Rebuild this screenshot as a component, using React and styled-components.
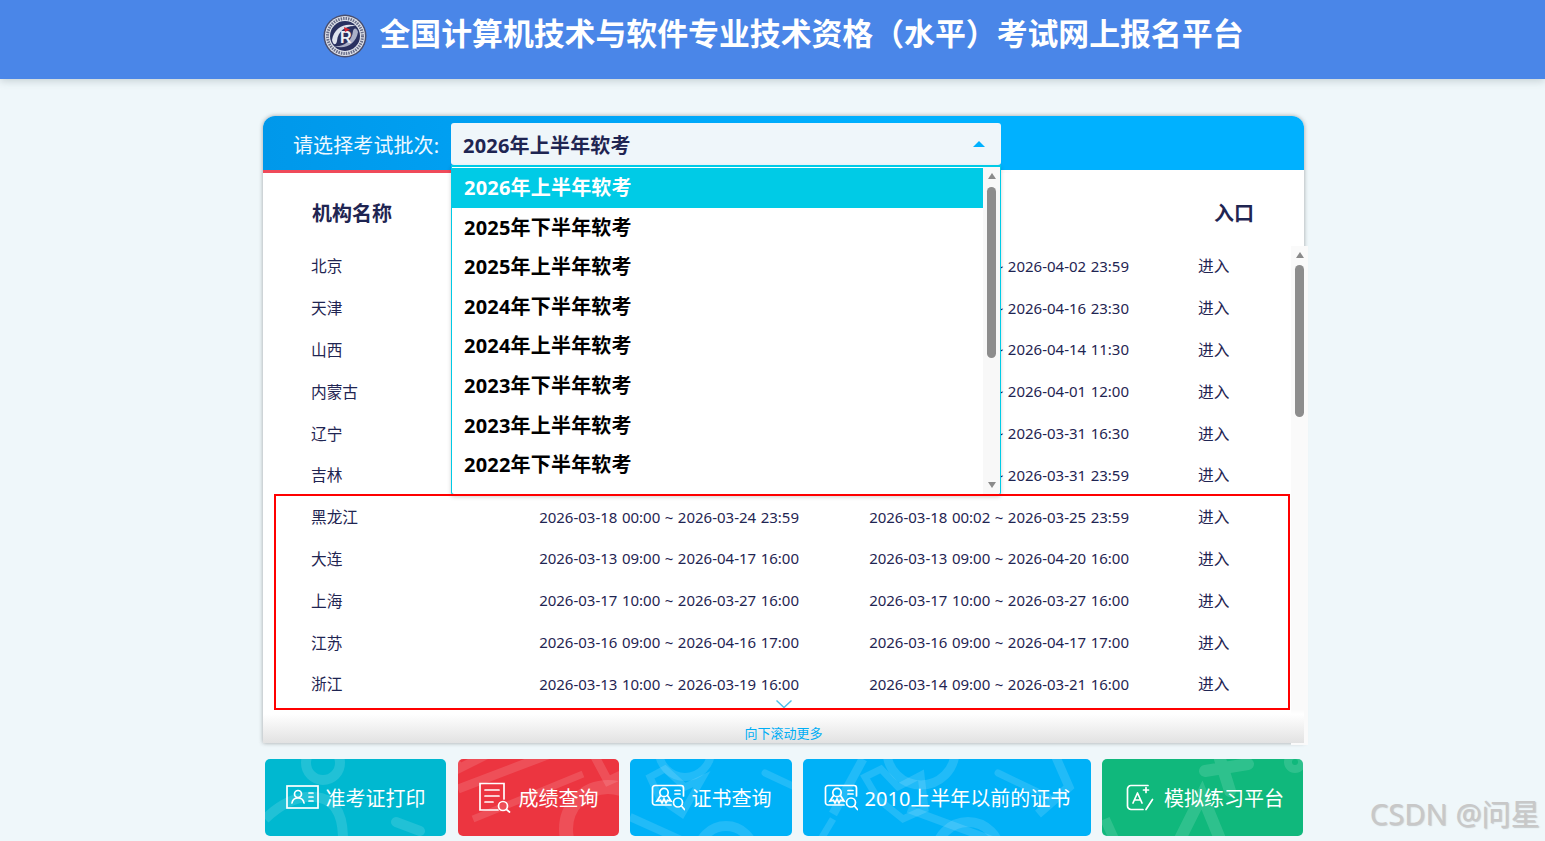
import React from "react";
import styled, { createGlobalStyle } from "styled-components";

const Global = createGlobalStyle`
  html, body { margin: 0; padding: 0; height: 841px; overflow: hidden; background: #eff7fa; }
  body { font-family: "Noto Sans", "Noto Sans CJK SC", sans-serif; color: #1f2552; }
  * { box-sizing: border-box; }
`;

const Page = styled.div`
  position: relative;
  width: 1545px;
  height: 841px;
  overflow: hidden;
`;
const TopBar = styled.header`
  height: 79px;
  background: #4a86e8;
  box-shadow: 0 2px 8px rgba(70, 90, 100, 0.25);
  display: flex;
  align-items: flex-start;
  justify-content: center;
  gap: 12px;
  padding: 14px 0 0 22px;
`;
const Title = styled.h1`
  margin: 0;
  color: #fff;
  font-size: 30.87px;
  line-height: 38px;
  font-weight: 700;
  white-space: nowrap;
`;
const Main = styled.main`
  width: 1041px;
  margin: 37px 0 0 263px;
`;
const Card = styled.section`
  position: relative;
  height: 627px;
  background: #fff;
  border-radius: 12px 12px 0 0;
  box-shadow: 0 0 4px rgba(60, 60, 60, 0.45);
`;
const SelectBar = styled.div`
  height: 54px;
  border-radius: 12px 12px 0 0;
  background: linear-gradient(90deg, #0098ea 0%, #00a4f6 30%, #00b1ff 62%);
  display: flex;
  align-items: flex-start;
  padding: 7px 0 0 30px;
`;
const SelectLabel = styled.label`
  width: 158px;
  height: 42px;
  line-height: 46px;
  color: #eef8ff;
  font-size: 20px;
  letter-spacing: 0.1px;
  white-space: nowrap;
`;
const SelectWrap = styled.div`
  position: relative;
  width: 550px;
`;
const SelectBox = styled.div`
  height: 42px;
  background: #eff6fa;
  border-radius: 3px;
  display: flex;
  align-items: center;
  justify-content: space-between;
  padding: 0 16px 0 12px;
  color: #1f2552;
  font-size: 20px;
  font-weight: 700;
  letter-spacing: 0.2px;
`;
const Caret = styled.span`
  width: 0;
  height: 0;
  border-left: 6px solid transparent;
  border-right: 6px solid transparent;
  border-bottom: 6px solid #00b1ff;
`;
const Dropdown = styled.div`
  position: absolute;
  z-index: 5;
  top: 42px;
  left: 0;
  width: 550px;
  height: 330px;
  background: #fff;
  border: 1px solid #00cbe6;
  border-top-width: 2px;
  border-radius: 0 0 3px 3px;
  box-shadow: 0 2px 4px rgba(0, 0, 0, 0.18);
  display: flex;
  overflow: hidden;
`;
const Options = styled.ul`
  list-style: none;
  margin: 1px 0 0;
  padding: 0;
  flex: 1;
`;
const Option = styled.li`
  height: 39.6px;
  line-height: 40px;
  padding-left: 12px;
  font-size: 20px;
  font-weight: 700;
  letter-spacing: 0.2px;
  color: ${(p) => (p.$active ? "#fff" : "#000")};
  background: ${(p) => (p.$active ? "#00cbe6" : "transparent")};
`;
const Track = styled.div`
  width: 17px;
  background: #f8f8f8;
  display: flex;
  flex-direction: column;
  align-items: center;
  flex-shrink: 0;
`;
const ArrowUp = styled.span`
  width: 0;
  height: 0;
  border-left: 4.5px solid transparent;
  border-right: 4.5px solid transparent;
  border-bottom: 6px solid #8a8a8a;
`;
const ArrowDown = styled(ArrowUp)`
  border-bottom: 0;
  border-top: 6px solid #8a8a8a;
`;
const Thumb = styled.span`
  width: 9px;
  background: #8d8d8d;
  border-radius: 5px;
`;
const DropTrack = styled(Track)`
  padding: 6px 0 6px;
  justify-content: space-between;
`;
const DropThumbWrap = styled.div`
  flex: 1;
  display: flex;
  padding-top: 8px;
  height: 180px;
  align-items: flex-start;
`;
const DropThumb = styled(Thumb)`
  height: 171px;
`;
const Stripe = styled.div`
  height: 3px;
  background: linear-gradient(90deg, #ef4a5a 0%, #ef4a5a 20%, #fff 72%);
`;
const TableHead = styled.div`
  height: 72px;
  display: grid;
  grid-template-columns: 1fr auto;
  padding: 6px 50px 0 49px;
  align-items: center;
  font-size: 20px;
  font-weight: 700;
  color: #1f2552;
`;
const List = styled.div`
  height: 499px;
  overflow: hidden;
`;
const Row = styled.div`
  height: 41.8px;
  display: grid;
  grid-template-columns: 227px 330px 330px 1fr;
  padding-left: 48px;
  align-items: center;
  font-size: 15.7px;
  color: #1f2552;
  white-space: nowrap;
`;
const DateCell = styled.span`
  width: 261px;
  text-align: right;
  font-size: 15px;
  word-spacing: 0.6px;
`;
const Scroller = styled(Track)`
  position: absolute;
  z-index: 2;
  top: 130px;
  right: -4px;
  height: 499px;
  background: #fafafa;
  padding-top: 6px;
`;
const ListThumb = styled(Thumb)`
  height: 152px;
  margin-top: 7px;
`;
const Fade = styled.div`
  position: absolute;
  left: 0;
  right: 0;
  bottom: 0;
  height: 34px;
  background: linear-gradient(180deg, rgba(255,255,255,0) 0%, #fff 15%, #e2e2e2 100%);
  z-index: 3;
  text-align: center;
  padding-top: 15px;
  font-size: 13px;
  line-height: 18px;
  color: #00aef5;
`;
const Chevron = styled.svg`
  position: absolute;
  z-index: 4;
  left: 512px;
  bottom: 34px;
  display: block;
`;
const RedBox = styled.div`
  position: absolute;
  z-index: 6;
  left: 11px;
  top: 378px;
  width: 1016px;
  height: 216px;
  border: 2px solid #f00;
  pointer-events: none;
`;
const Actions = styled.nav`
  display: flex;
  gap: 11px;
  margin: 16px 0 0 2px;
`;
const Action = styled.a`
  position: relative;
  overflow: hidden;
  width: ${(p) => p.$w}px;
  margin-right: ${(p) => p.$mr || 0}px;
  height: 77px;
  border-radius: 5px;
  background: ${(p) => p.$bg};
  display: flex;
  align-items: center;
  justify-content: center;
  gap: ${(p) => p.$gap || 7}px;
  padding-left: ${(p) => p.$pl || 0}px;
  color: #fff;
  font-size: 20px;
  white-space: nowrap;
`;
const Decor = styled.svg`
  position: absolute;
  inset: 0;
  fill: none;
  stroke: rgba(255, 255, 255, 0.13);
`;
const ActionIcon = styled.svg`
  position: relative;
  flex-shrink: 0;
  fill: none;
  stroke: #fff;
  stroke-width: 1.7;
`;
const ActionText = styled.span`
  position: relative;
`;
const Watermark = styled.div`
  position: absolute;
  right: 5px;
  bottom: 8px;
  color: #c8c8c8;
  font-size: 29.2px;
  line-height: 38px;
  text-shadow: 1px 1px 1px rgba(120, 120, 120, 0.35);
  white-space: nowrap;
`;

const batches = ["2026年上半年软考","2025年下半年软考","2025年上半年软考","2024年下半年软考","2024年上半年软考","2023年下半年软考","2023年上半年软考","2022年下半年软考"];
const rows = [
  ["北京","","~ 2026-04-02 23:59"],
  ["天津","","~ 2026-04-16 23:30"],
  ["山西","","~ 2026-04-14 11:30"],
  ["内蒙古","","~ 2026-04-01 12:00"],
  ["辽宁","","~ 2026-03-31 16:30"],
  ["吉林","","~ 2026-03-31 23:59"],
  ["黑龙江","2026-03-18 00:00 ~ 2026-03-24 23:59","2026-03-18 00:02 ~ 2026-03-25 23:59"],
  ["大连","2026-03-13 09:00 ~ 2026-04-17 16:00","2026-03-13 09:00 ~ 2026-04-20 16:00"],
  ["上海","2026-03-17 10:00 ~ 2026-03-27 16:00","2026-03-17 10:00 ~ 2026-03-27 16:00"],
  ["江苏","2026-03-16 09:00 ~ 2026-04-16 17:00","2026-03-16 09:00 ~ 2026-04-17 17:00"],
  ["浙江","2026-03-13 10:00 ~ 2026-03-19 16:00","2026-03-14 09:00 ~ 2026-03-21 16:00"],
];

const Logo = () => (
  <svg width="44" height="44" viewBox="0 0 44 44" style={{ flexShrink: 0 }}>
    <circle cx="22" cy="22" r="21.5" fill="#4a4f6e" />
    <circle cx="22" cy="22" r="20" fill="#dfe2ea" />
    <circle cx="22" cy="22" r="17.500" fill="none" stroke="#6a6f8a" strokeWidth="3" strokeDasharray="1.500 1" />
    <circle cx="22" cy="22" r="15" fill="#2a3160" />
    <path d="M9 26C11 14 22 8 33 12C24 11 15 16 14 27C13 32 10 31 9 26Z" fill="#dfe3ee" />
    <path d="M35 18C33 30 22 36 11 32C20 33 29 28 30 17C31 13 34 14 35 18Z" fill="#aab0c8" />
    <text x="17" y="29" fontSize="16" fontWeight="700" fontFamily="Liberation Sans, sans-serif" fill="#eef0f6">R</text>
    <path d="M21 13L27 15.500L22 18Z" fill="#d8232f" />
  </svg>
);

const CertIcon = () => (
  <ActionIcon width="34" height="27" viewBox="0 0 34 27" strokeLinecap="round">
    <path d="M20 21H4a2.500 2.500 0 0 1-2.500-2.500V4A2.500 2.500 0 0 1 4 1.500h26A2.500 2.500 0 0 1 32.500 4v8" />
    <circle cx="13" cy="8.500" r="4.200" />
    <path d="M9.500 11.500L6 17l3.500-.7L11 19l2-4 2 4 1.500-2.700L20 17l-3.500-5.500" />
    <path d="M24 6.500h5M24 10h5" />
    <circle cx="27" cy="18.500" r="4.500" />
    <path d="M30.500 22l3 3.500" />
  </ActionIcon>
);

const decor = {
  cyan: (
    <>
      <circle cx="58" cy="4" r="17" strokeWidth="10" />
      <path d="M0 60Q25 36 50 38Q78 40 78 80" strokeWidth="10" />
      <path d="M131 63L155 72" strokeWidth="10" strokeLinecap="round" />
    </>
  ),
  red: (
    <>
      <path d="M0 30L100 -8M-6 -10H40L0 10Z" strokeWidth="9" />
      <path d="M15 60L125 15" strokeWidth="7" />
      <circle cx="150" cy="70" r="42" strokeWidth="14" />
      <path d="M135 -6L150 22L172 12" strokeWidth="9" />
    </>
  ),
  blue: (
    <>
      <path d="M20 18L35 10L55 28L72 20L52 55L30 40Z" strokeWidth="7" />
      <circle cx="55" cy="-8" r="26" strokeWidth="8" />
      <path d="M0 58L60 85" strokeWidth="8" />
      <circle cx="96" cy="95" r="28" strokeWidth="10" />
      <path d="M135 14L165 28" strokeWidth="7" strokeLinecap="round" />
    </>
  ),
  wide: (
    <>
      <path d="M30 55L60 0" strokeWidth="9" />
      <path d="M62 18L78 10L95 28L118 16L122 50L100 60L75 40Z" strokeWidth="7" />
      <circle cx="118" cy="-8" r="34" strokeWidth="9" />
      <path d="M105 50L200 85" strokeWidth="8" />
      <path d="M195 14L245 38" strokeWidth="7" strokeLinecap="round" />
      <path d="M252 -4L266 28L235 55" strokeWidth="9" />
      <circle cx="165" cy="95" r="32" strokeWidth="10" />
      <path d="M30 60L15 85" strokeWidth="7" />
    </>
  ),
  green: (
    <>
      <path d="M103 12L146 5M118 0L128 32" strokeWidth="12" strokeLinecap="round" />
      <path d="M78 80L100 36L118 80" strokeWidth="12" />
      <circle cx="193" cy="3" r="7" strokeWidth="8" />
      <path d="M3 60L12 80" strokeWidth="10" />
    </>
  ),
};

const actions = [
  { w: 181, mr: 1, bg: "#00b8d0", d: decor.cyan, t: "准考证打印", i: (
    <ActionIcon width="33" height="25" viewBox="0 0 33 25" strokeLinecap="round">
      <rect x="1" y="1" width="31" height="22" />
      <circle cx="12" cy="9" r="3.500" />
      <path d="M6 18c.5-3.500 3-5 6-5s5.500 1.500 6 5M23 8h4M23 12h4M23 16h4" />
    </ActionIcon>
  ) },
  { w: 161, bg: "#ec3540", d: decor.red, t: "成绩查询", i: (
    <ActionIcon width="33" height="31" viewBox="0 0 33 31" strokeWidth="2" strokeLinecap="round">
      <path d="M19 28H1V1.500h24V17" />
      <path d="M6 8h14M6 14h14M6 20h8" />
      <circle cx="24" cy="24" r="4.500" />
      <path d="M27.500 27.500l3 2.500" />
    </ActionIcon>
  ) },
  { w: 162, bg: "#00b1f7", d: decor.blue, t: "证书查询", i: <CertIcon /> },
  { w: 288, bg: "#00b1f7", d: decor.wide, t: "2010上半年以前的证书", i: <CertIcon /> },
  { w: 201, gap: 10, pl: 5, bg: "#10b87c", d: decor.green, t: "模拟练习平台", i: (
    <ActionIcon width="28" height="27" viewBox="0 0 28 27" strokeLinecap="round" strokeLinejoin="round">
      <path d="M22 1.500H5A3.500 3.500 0 0 0 1.500 5v17A3.500 3.500 0 0 0 5 25.500h12" />
      <path d="M7 19l4.500-10 4.500 10M8.500 16h6" />
      <path d="M17.500 6h5M20 3.500v5" />
      <path d="M20 25.500l6.500-10" />
    </ActionIcon>
  ) },
];

export default function App() {
  return (
    <Page>
      <Global />
      <TopBar>
        <Logo />
        <Title>全国计算机技术与软件专业技术资格（水平）考试网上报名平台</Title>
      </TopBar>
      <Main>
        <Card>
          <SelectBar>
            <SelectLabel>请选择考试批次:</SelectLabel>
            <SelectWrap>
              <SelectBox>
                2026年上半年软考
                <Caret />
              </SelectBox>
              <Dropdown>
                <Options>
                  {batches.map((b, i) => (
                    <Option key={b} $active={i === 0}>{b}</Option>
                  ))}
                </Options>
                <DropTrack>
                  <ArrowUp />
                  <DropThumbWrap><DropThumb /></DropThumbWrap>
                  <ArrowDown />
                </DropTrack>
              </Dropdown>
            </SelectWrap>
          </SelectBar>
          <Stripe />
          <TableHead>
            <span>机构名称</span>
            <span>入口</span>
          </TableHead>
          <List>
            {rows.map((r) => (
              <Row key={r[0]}>
                <span>{r[0]}</span>
                <DateCell>{r[1]}</DateCell>
                <DateCell>{r[2]}</DateCell>
                <span>进入</span>
              </Row>
            ))}
          </List>
          <Scroller>
            <ArrowUp />
            <ListThumb />
          </Scroller>
          <Chevron width="18" height="10" viewBox="0 0 18 10">
            <path d="M1.500 1.500L9 8.500L16.500 1.500" fill="none" stroke="#4fbfe8" strokeWidth="1.400" />
          </Chevron>
          <Fade>向下滚动更多</Fade>
          <RedBox />
        </Card>
        <Actions>
          {actions.map((a) => (
            <Action key={a.t} $w={a.w} $mr={a.mr} $gap={a.gap} $pl={a.pl} $bg={a.bg}>
              <Decor width={a.w} height="77" viewBox={`0 0 ${a.w} 77`}>{a.d}</Decor>
              {a.i}
              <ActionText>{a.t}</ActionText>
            </Action>
          ))}
        </Actions>
      </Main>
      <Watermark>CSDN @问星</Watermark>
    </Page>
  );
}
